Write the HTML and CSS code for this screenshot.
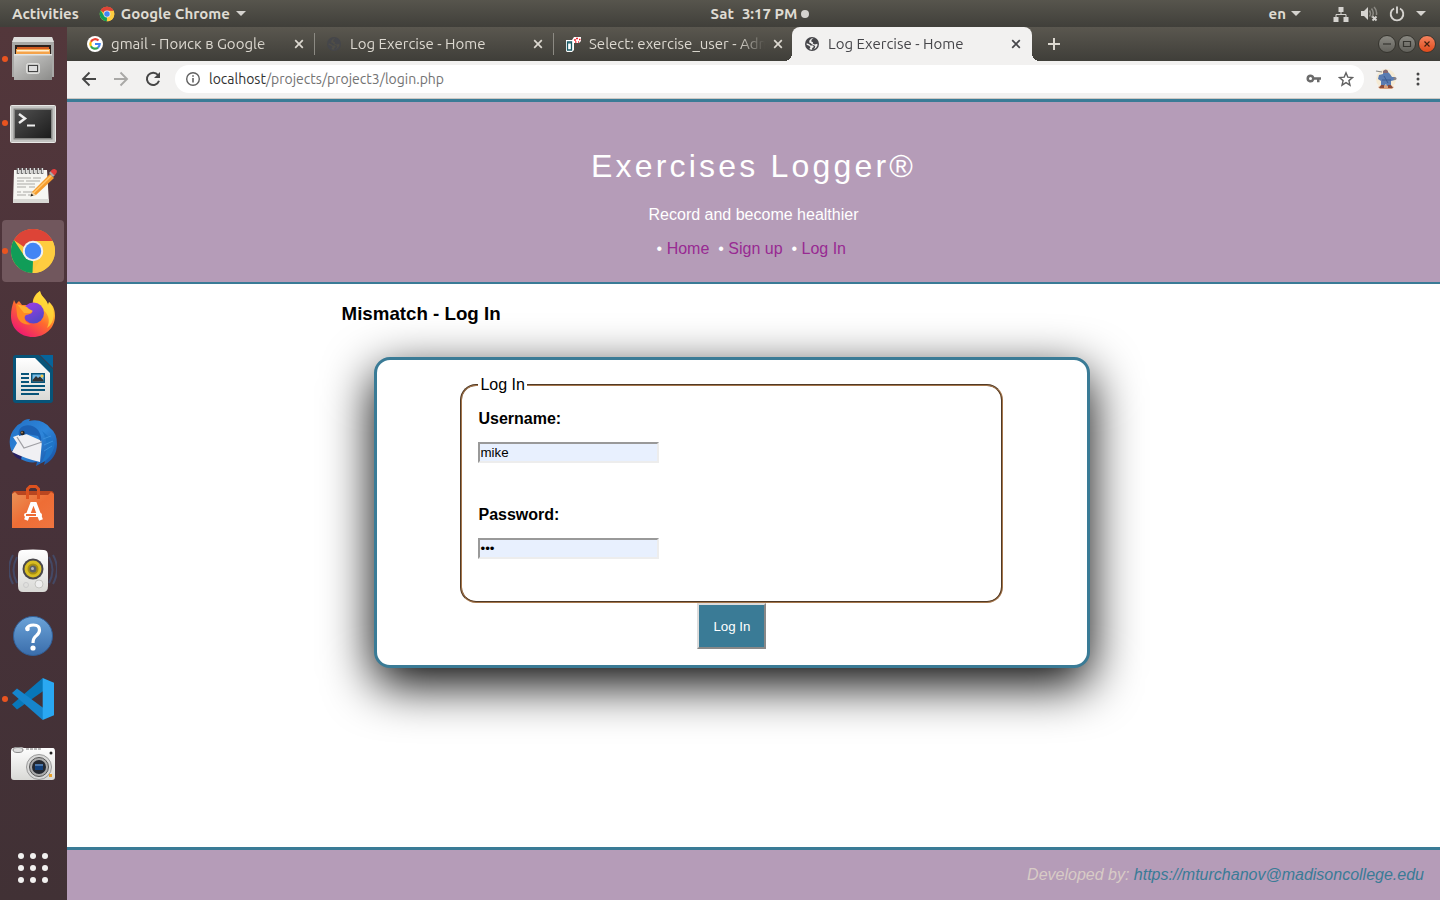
FILE: index.html
```html
<!DOCTYPE html>
<html lang="en">
<head>
<meta charset="utf-8">
<title>Log Exercise - Home</title>
<link rel="stylesheet" href="styles.css">
</head>
<body>
<svg width="0" height="0" class="defs" aria-hidden="true">
  <defs>
    <symbol id="chrome" viewBox="0 0 48 48">
      <circle cx="24" cy="24" r="22" fill="#fbc93c"/>
      <path d="M24 24 4.900 13A22 22 0 0 1 43.100 13L24 14Z" fill="#dd4437"/>
      <path d="M4.900 13 15.300 29 24 34 23.500 46A22 22 0 0 1 4.900 13Z" fill="#109d58"/>
      <path d="M24 14H43.600A22 22 0 0 1 23.500 46L33 29Z" fill="#fecd40"/>
      <path d="M4.900 13A22 22 0 0 1 43.600 14H24L15 20Z" fill="#dd4437"/>
      <circle cx="24" cy="24" r="10.200" fill="#f1f1f1"/>
      <circle cx="24" cy="24" r="8.200" fill="#4285f4"/>
    </symbol>
    <symbol id="close" viewBox="0 0 10 10"><path d="M1.200 1.200 8.800 8.800M8.800 1.200 1.200 8.800" fill="none" stroke="currentColor" stroke-width="1.700"/></symbol>
    <symbol id="globe" viewBox="0 0 16 16">
      <circle cx="8" cy="8" r="7" fill="currentColor"/>
      <path d="M9.500 2.300 7.500 3.800 7.300 5.600 9 6.200 8.800 7.400 10.500 8.600 13.400 7.800 13.500 9.200 12 12 9 13.600 8 13.600 8.200 12 9.800 10.900 9 9.600 6.500 9.400 5.300 8.200 2.700 7.200 2.600 8.800 5 9.800 6.500 11 5.400 13 7 13.700 9.500 13.500 11 11.600 11.200 10 7.800 8.300 6.800 7.300 5.200 6.600 5.400 4.400 7.300 2.500Z" fill="var(--land)"/>
    </symbol>
    <linearGradient id="metal" x1="0" y1="0" x2="1" y2="1"><stop offset="0" stop-color="#d0d0ce"/><stop offset="1" stop-color="#8c8c8a"/></linearGradient>
    <linearGradient id="paper" x1="0" y1="0" x2="0" y2="1"><stop offset="0" stop-color="#fff"/><stop offset="1" stop-color="#d9d9d6"/></linearGradient>
    <linearGradient id="fox" x1="1" y1="0" x2="0.300" y2="1"><stop offset="0" stop-color="#fff44f"/><stop offset="0.350" stop-color="#ffb72d"/><stop offset="0.600" stop-color="#ff6a2e"/><stop offset="1" stop-color="#ee1a70"/></linearGradient>
    <linearGradient id="foxcore" x1="0" y1="0" x2="0.500" y2="1"><stop offset="0" stop-color="#a33be8"/><stop offset="1" stop-color="#5448c8"/></linearGradient>
    <linearGradient id="bird" x1="0" y1="0" x2="1" y2="1"><stop offset="0" stop-color="#226fc4"/><stop offset="0.500" stop-color="#2e86da"/><stop offset="1" stop-color="#164d9e"/></linearGradient>
    <linearGradient id="help" x1="0" y1="0" x2="0" y2="1"><stop offset="0" stop-color="#6ba3d8"/><stop offset="1" stop-color="#3a6dab"/></linearGradient>
    <linearGradient id="bag" x1="0" y1="0" x2="1" y2="1"><stop offset="0" stop-color="#ea9257"/><stop offset="0.500" stop-color="#ee6d35"/><stop offset="1" stop-color="#ef7540"/></linearGradient>
    <linearGradient id="screen" x1="0" y1="0" x2="1" y2="1"><stop offset="0" stop-color="#505050"/><stop offset="1" stop-color="#1c1c1c"/></linearGradient>
  </defs>
</svg>

<header class="panel">
  <div class="panel-left">
    <button class="panel-button">Activities</button>
    <button class="panel-button app-menu"><svg class="i16"><use href="#chrome"/></svg>Google Chrome<span class="caret"></span></button>
  </div>
  <button class="panel-button clock"><span>Sat</span><span>3:17 PM</span><span class="dot"></span></button>
  <div class="panel-right">
    <button class="panel-button lang">en<span class="caret"></span></button>
    <button class="panel-button status" aria-label="System menu">
      <svg class="i16" viewBox="0 0 16 16" fill="#d5d3cf"><path d="M5.500 1h5v5h-5zM.500 11h5v5h-5zM10.500 11h5v5h-5z"/><path d="M8 6v3M3 11V8.500h10V11" fill="none" stroke="#d5d3cf"/></svg>
      <svg class="i18" viewBox="0 0 18 18"><path d="M1 6h3l4-4v13l-4-4H1Z" fill="#d5d3cf"/><path d="M9.500 5.500q2 3 0 6M11.500 3.500q3.500 4.500 0 9M14 2q3 3 2.500 8" fill="none" stroke="#8b8983" stroke-width="1.500"/><path d="m12.500 11.500 4 4m0-4-4 4" stroke="#d5d3cf" stroke-width="1.800"/></svg>
      <svg class="i16" viewBox="0 0 16 16" fill="none" stroke="#d5d3cf" stroke-width="1.900"><path d="M5 2.500a6.300 6.300 0 1 0 6 0M8 .500v7"/></svg>
      <span class="caret"></span>
    </button>
  </div>
</header>

<div class="desktop">
  <nav class="dock" aria-label="Dock">
    <button class="dock-item running" aria-label="Files">
      <svg viewBox="0 0 48 48"><path d="M5 2H43L45 8V42H3V8Z" fill="#a9a9a7"/><path d="M5 2H43L45 7H3Z" fill="#dededc"/><path d="M6 10H42V20H6Z" fill="#2c211d"/><path d="M8 12H40V20H8Z" fill="#d25a20"/><path d="M7 14H41V20H7Z" fill="#f5a34a"/><path d="M8 15H40V16.500H8Z" fill="#fff0d5"/><path d="M5 19H43V45H5Z" fill="url(#metal)"/><path d="M5 19H43V20.500H5Z" fill="#e4e4e2"/><rect x="17.500" y="28.500" width="13" height="10" rx="2" fill="#c8c8c6" stroke="#e0e0de"/><rect x="19.500" y="30.500" width="9" height="6" fill="#ddd" stroke="#444"/></svg>
    </button>
    <button class="dock-item running" aria-label="Terminal">
      <svg viewBox="0 0 48 48"><rect x="1.500" y="6.500" width="45" height="37" rx="1" fill="#c4c4c2" stroke="#e9e9e7"/><rect x="4.500" y="9.500" width="39" height="31" fill="#858583"/><rect x="6" y="11" width="36" height="28" fill="url(#screen)"/><path d="m10 15 6 4.500L10 24" fill="none" stroke="#eee" stroke-width="2.500"/><path d="M18 26.500H26" stroke="#eee" stroke-width="2"/></svg>
    </button>
    <button class="dock-item" aria-label="Text Editor">
      <svg viewBox="0 0 48 48"><path d="M5 7H38L40 40H4Z" fill="#f6f6f2"/><path d="M4 36H40V40H4Z" fill="#d9d9d5"/><path d="M9 5v6M13 5v6M17 5v6M21 5v6M25 5v6M29 5v6M33 5v6" stroke="#777" stroke-width="2.600"/><path d="M9.500 5v5M13.500 5v5M17.500 5v5M21.500 5v5M25.500 5v5M29.500 5v5M33.500 5v5" stroke="#ddd"/><path d="M8 15h14m2 0h8M8 18h7m2 0h14M8 21h18M8 24h9m3 0h6M8 29h4m2 0h10M8 32h9m2 0h5" stroke="#aaa9a5"/><path d="m23 29 18-18 4 4-18 17-5 1Z" fill="#f59c2d"/><path d="m24.500 30 18-17.500" stroke="#ffc66d" stroke-width="1.500"/><path d="m23 29 4 3-5.500 1.500Z" fill="#eed7af"/><path d="m21.500 33.500 1-3 2 2Z" fill="#222"/><path d="m40 10 4 4 2-2-4-4Z" fill="#aaa"/><path d="m41.500 8.500 4 4c3-3 3-5 1-6s-3-.500-5 2Z" fill="#e13e3e"/></svg>
    </button>
    <button class="dock-item running active" aria-label="Google Chrome"><svg><use href="#chrome"/></svg></button>
    <button class="dock-item" aria-label="Firefox">
      <svg viewBox="0 0 48 48"><path d="M24 46C11 46 2 37 2 25 2 19 3 15 5 9L7 13 10 10 13 14 24 14C23 8 26 3 31 0 32 6 38 8 39 14L40 11C45 15 46 20 46 25 46 37 36 46 24 46Z" fill="url(#fox)"/><path d="M31 0C32 6 38 8 39 14L40 11C47 19 46 32 38 37 42 29 39 22 33 18 30 15 25 14 24 13 24 7 28 3 31 0Z" fill="#ffde3b" opacity=".750"/><circle cx="24.500" cy="22" r="10.500" fill="url(#foxcore)"/><path d="M7 13 15 16 23 20C24 23 20 23 17 24 14 26 16 32 22 33 16 35 9 31 8 24Z" fill="#ff8a24"/><path d="M8 13C12 15 17 14 20 18L24 20 21 22 15 22Z" fill="#ffb030"/></svg>
    </button>
    <button class="dock-item" aria-label="LibreOffice Writer">
      <svg viewBox="0 0 48 48"><path d="M7 0H30L44 14V45Q44 48 41 48H7Q4 48 4 45V3Q4 0 7 0Z" fill="#075479"/><path d="M7 3H26L41 18V45H7Z" fill="url(#paper)"/><path d="M31 0H44V13Z" fill="#06649b"/><path d="M12 19h8M12 23h8M12 27h8M12 31h24M12 35h24M12 39h18" stroke="#075479" stroke-width="2"/><path d="M22 18H36V28H22Z" fill="#075479"/><path d="M23.500 19.500H34.500V26.500H23.500Z" fill="#77bde8"/><path d="M23.500 26.500V25L27 21 29 23 31 21.500 34.500 25V26.500Z" fill="#333"/><circle cx="33" cy="21" r="1.500" fill="#f6c945"/></svg>
    </button>
    <button class="dock-item" aria-label="Thunderbird">
      <svg viewBox="0 0 48 48"><path d="M12 4Q15 0 21 0L20 2Q33-1 41 9 48 14 48 25 48 39 35 46L36 42 27 47 28 43C18 45 7 39 2 31Q-2 18 6 9Q9 5 14 3Z" fill="url(#bird)"/><path d="M3 31Q4 38 12 41L13 36Z" fill="#282163"/><path d="M4 18 15 14 33 22 31 43Q17 40 3 33L8 24Z" fill="#f0f0f3"/><path d="m8 18 7 11 18-6" fill="none" stroke="#a0a0a5" stroke-width="1.300"/><path d="M10 17C7 5 23 3 29 11 33 17 32 21 33 25L29 17 18 15Z" fill="#1c61b4"/><path d="M33 12Q43 28 32 44L36 42Q45 35 46 23Z" fill="#1f75c8"/><path d="m34 20 8-3M35 26l9-4M35 32l8-5" stroke="#3a90dc"/><circle cx="13.500" cy="14" r="2.200" fill="#222"/><circle cx="13" cy="13.500" r="1" fill="#a47e58"/></svg>
    </button>
    <button class="dock-item" aria-label="Ubuntu Software">
      <svg viewBox="0 0 48 48"><path d="M3 12Q3 8 6 8H42Q45 8 45 12Z" fill="#b94620"/><path d="M3 11 6 9 9 12H39L42 9 45 11V45H3Z" fill="url(#bag)"/><path d="M18.500 16V6L21 3.500H27L29.500 6V16" fill="none" stroke="#dc521f" stroke-width="3"/><path d="M17 37 23 21h3l6 16" fill="none" stroke="#fff" stroke-width="4"/><rect x="15" y="30" width="18" height="4" rx="2" fill="#fff"/><path d="M17 32H27" stroke="#ee6d35" stroke-width="2"/></svg>
    </button>
    <button class="dock-item" aria-label="Rhythmbox">
      <svg viewBox="0 0 48 48"><path d="M4 8Q-4 22 4 37M8 10Q1 23 8 36M44 8Q52 22 44 37M40 10Q47 23 40 36" fill="none" stroke="#435277" stroke-width="2" opacity=".700"/><path d="M13 3Q24 2 35 3 39 3 39 9V39Q39 45 34 45H14Q9 45 9 39V9Q9 3 13 3Z" fill="url(#paper)"/><circle cx="24" cy="22" r="10.500" fill="#49474b"/><circle cx="24" cy="22" r="8.500" fill="#d8bd22"/><circle cx="24" cy="22" r="5.500" fill="#a88e12"/><circle cx="24" cy="22" r="3.500" fill="#5d6064"/><circle cx="23.500" cy="21.500" r="1.500" fill="#bbb"/><circle cx="30" cy="37" r="4" fill="#eee" stroke="#c5c5c2"/><circle cx="17" cy="38" r="2.500" fill="none" stroke="#ccc"/></svg>
    </button>
    <button class="dock-item" aria-label="Help">
      <svg viewBox="0 0 48 48"><circle cx="24" cy="25" r="19.500" fill="url(#help)" stroke="#315f98"/><path d="M17.500 18Q19 14 24.500 14 30.500 14 30.500 19 30.500 22 27.500 24.500 24 27 24 32" fill="none" stroke="#fff" stroke-width="3.200"/><circle cx="18.500" cy="18" r="2.300" fill="#fff"/><circle cx="24" cy="37" r="2.600" fill="#fff"/></svg>
    </button>
    <button class="dock-item running" aria-label="Visual Studio Code">
      <svg viewBox="0 0 48 48"><path d="M33.700 3 3 29.500 8 34.500 35 15.500Z" fill="#0877b9"/><path d="M3 18 8 13.500 35 33.500 33.700 45Z" fill="#1685cc"/><path d="M33.700 3 45 7.700V40.300L33.700 45Z" fill="#2aa8f2"/></svg>
    </button>
    <button class="dock-item" aria-label="Shotwell">
      <svg viewBox="0 0 48 48"><path d="M4 9Q10 7 15 9H44Q46 9 46 13V38Q46 41 43 41H5Q2 41 2 38V13Q2 9 4 9Z" fill="url(#paper)"/><ellipse cx="9" cy="11" rx="5" ry="2.500" fill="#ddd" stroke="#888"/><path d="M17 10H32" stroke="#777" stroke-dasharray="3 1"/><circle cx="30" cy="28" r="12.500" fill="#d8d8d7" stroke="#999"/><circle cx="30" cy="28" r="9.500" fill="#aaa" stroke="#555"/><circle cx="30" cy="28" r="7" fill="#242830"/><path d="M26 25H34V31H26Z" fill="#123f79"/><path d="M26 25H34V27H26Z" fill="#4b75a7"/><circle cx="42" cy="14" r="1.500" fill="#222"/><path d="M40 35H43V38H40Z" fill="#eba129"/></svg>
    </button>
    <button class="dock-item apps" aria-label="Show Applications">
      <svg viewBox="0 0 48 48" fill="#f2f1f0"><circle cx="12" cy="12" r="3"/><circle cx="24" cy="12" r="3"/><circle cx="36" cy="12" r="3"/><circle cx="12" cy="24" r="3"/><circle cx="24" cy="24" r="3"/><circle cx="36" cy="24" r="3"/><circle cx="12" cy="36" r="3"/><circle cx="24" cy="36" r="3"/><circle cx="36" cy="36" r="3"/></svg>
    </button>
  </nav>

  <div class="browser">
    <div class="tabstrip">
      <div class="tab">
        <svg class="i16" viewBox="0 0 16 16"><circle cx="8" cy="8" r="8" fill="#fff"/><g fill="none" stroke-width="2.200"><path d="M11.500 4.600A4.700 4.700 0 0 0 3.900 5.800" stroke="#ea4335"/><path d="M3.900 5.800A4.700 4.700 0 0 0 3.900 10.300" stroke="#fbbc05"/><path d="M3.900 10.300A4.700 4.700 0 0 0 11 11.600" stroke="#34a853"/><path d="M11 11.600Q12.700 10.200 12.700 8H8" stroke="#4285f4"/></g></svg>
        <span class="tab-title">gmail - Поиск в Google</span>
        <button class="tab-close" aria-label="Close tab"><svg><use href="#close"/></svg></button>
      </div>
      <div class="tab">
        <svg class="i16 dim"><use href="#globe"/></svg>
        <span class="tab-title">Log Exercise - Home</span>
        <button class="tab-close" aria-label="Close tab"><svg><use href="#close"/></svg></button>
      </div>
      <div class="tab no-rule">
        <svg class="i16" viewBox="0 0 16 16"><path d="M1 4H7L9 1H16V5L14 7H9V14L7 16H2L1 15Z" fill="#fff"/><path d="M2.500 6H6.500V14H2.500Z" fill="#fff" stroke="#185a66" stroke-width="1.300"/><path d="M2 7H7" stroke="#185a66"/><path d="M9 4h2M11 2.500h2M14 3.500h1.500M10 6h1.500M13 6h1" stroke="#ee2630" stroke-width="1.300"/></svg>
        <span class="tab-title">Select: exercise_user - Adminer</span>
        <button class="tab-close" aria-label="Close tab"><svg><use href="#close"/></svg></button>
      </div>
      <div class="tab current">
        <svg class="i16"><use href="#globe"/></svg>
        <span class="tab-title">Log Exercise - Home</span>
        <button class="tab-close" aria-label="Close tab"><svg><use href="#close"/></svg></button>
      </div>
      <button class="new-tab" aria-label="New tab"><svg viewBox="0 0 12 12"><path d="M6 0V12M0 6H12" stroke="currentColor" stroke-width="2"/></svg></button>
      <div class="window-controls">
        <button aria-label="Minimize"><svg viewBox="0 0 16 16"><path d="M4 8H12" stroke="#35342f" stroke-width="1.200"/></svg></button>
        <button aria-label="Maximize"><svg viewBox="0 0 16 16"><path d="M4.500 5.500H11.500V10.500H4.500Z" fill="none" stroke="#35342f" stroke-width="1.200"/></svg></button>
        <button class="window-close" aria-label="Close"><svg viewBox="0 0 16 16"><path d="m5.500 5.500 5 5m0-5-5 5" stroke="#41200f" stroke-width="1.200"/></svg></button>
      </div>
    </div>

    <div class="toolbar">
      <button class="tool" aria-label="Back"><svg class="i16" viewBox="0 0 16 16" fill="none" stroke="#464646" stroke-width="1.900"><path d="M15 8H2M8.500 1.500 2 8l6.500 6.500"/></svg></button>
      <button class="tool" aria-label="Forward"><svg class="i16" viewBox="0 0 16 16" fill="none" stroke="#a9a8a6" stroke-width="1.900"><path d="M1 8H14M7.500 1.500 14 8l-6.500 6.500"/></svg></button>
      <button class="tool" aria-label="Reload"><svg class="i16" viewBox="0 0 16 16"><path d="M13 4A6.200 6.200 0 1 0 14 9.800" fill="none" stroke="#464646" stroke-width="2"/><path d="M15 1V7H9Z" fill="#464646"/></svg></button>
      <div class="omnibox">
        <svg class="i16" viewBox="0 0 16 16"><circle cx="8" cy="8" r="6.300" fill="none" stroke="#616161" stroke-width="1.400"/><path d="M8 7v4.500M8 4.200v1.600" stroke="#616161" stroke-width="1.600"/></svg>
        <div class="url"><span class="host">localhost</span>/projects/project3/login.php</div>
        <button class="tool" aria-label="Saved password"><svg class="i16" viewBox="0 0 16 16"><path d="M4.500 3.500a4 4 0 1 0 3.800 5.200H11v2.500h2.500V8.700H15V6.300H8.300A4 4 0 0 0 4.500 3.500Zm0 2.500a1.500 1.500 0 1 1 0 3 1.500 1.500 0 0 1 0-3Z" fill="#6b6b6b" fill-rule="evenodd"/></svg></button>
        <button class="tool" aria-label="Bookmark"><svg class="i16" viewBox="0 0 16 16"><path d="m8 1.800 1.800 4.300 4.700.400-3.600 3.100 1.100 4.600L8 11.700l-4 2.500 1.100-4.600L1.500 6.500l4.700-.400Z" fill="none" stroke="#616161" stroke-width="1.400"/></svg></button>
      </div>
      <button class="tool avatar" aria-label="Profile"><svg viewBox="0 0 22 22"><circle cx="11" cy="11" r="10" fill="#f5ead4"/><path d="M3 19Q10 15 19 19L17 21H5Z" fill="#d99f79"/><path d="M8 5Q11 2 13 4L15 6 17 9 20 9V12L16 13 16 18H12L11 16 9 18H6L6 13 3 11 4 7 8 6Z" fill="#5a7cb2"/><path d="M8 3Q11 0 13 3V5H8Z" fill="#876a72"/><path d="M1 3 7 4" stroke="#8b8a88" stroke-width="1.200"/><path d="M7 12H16M9 8 13 15" stroke="#3b5a91"/><path d="M6 17H9V20H4ZM13 17H16L18 20H13Z" fill="#8b4b3b"/><circle cx="20" cy="10.500" r="1.500" fill="#8a8388"/></svg></button>
      <button class="tool" aria-label="Menu"><svg class="i16" viewBox="0 0 16 16" fill="#464646"><circle cx="8" cy="3" r="1.500"/><circle cx="8" cy="8" r="1.500"/><circle cx="8" cy="13" r="1.500"/></svg></button>
    </div>

    <div class="page">
      <header class="site-header">
        <h1>Exercises Logger®</h1>
        <p>Record and become healthier</p>
        <ul class="site-nav">
          <li>&bull; <a href="#home">Home</a>&nbsp;</li>
          <li>&bull; <a href="#signup">Sign up</a>&nbsp;</li>
          <li>&bull; <a href="#login">Log In</a>&nbsp;</li>
        </ul>
      </header>
      <main class="content">
        <h3>Mismatch - Log In</h3>
        <form class="login">
          <fieldset>
            <legend>Log In</legend>
            <div class="field"><label for="username">Username:</label><input id="username" type="text" value="mike"></div>
            <div class="field"><label for="password">Password:</label><input id="password" type="password" value="abc"></div>
          </fieldset>
          <button class="submit" type="button">Log In</button>
        </form>
      </main>
      <footer class="site-footer">Developed by: <a href="#author">https://mturchanov@madisoncollege.edu</a></footer>
    </div>
  </div>
</div>
</body>
</html>
```

FILE: styles.css
```css
* { box-sizing: border-box; }

body {
  margin: 0;
  min-height: 100vh;
  display: flex;
  flex-direction: column;
  font-family: "Liberation Sans", Arial, sans-serif;
  font-size: 16px;
  background: #fff;
}

svg { display: block; flex: none; }
.defs { position: absolute; }
.i16 { width: 16px; height: 16px; }
.i18 { width: 18px; height: 18px; }

.panel button, .dock button, .tabstrip button, .toolbar button {
  border: 0;
  padding: 0;
  background: none;
  color: inherit;
}

/* Desktop top panel */
.panel {
  height: 27px;
  padding: 0 14px 0 12px;
  display: grid;
  grid-template-columns: 1fr auto 1fr;
  align-items: center;
  color: #dfdbd2;
  background: linear-gradient(#57554d, #403f3a);
}
.panel .panel-button {
  display: flex;
  align-items: center;
  font: 600 15px/20px "Ubuntu", "Open Sans", "Noto Sans", sans-serif;
  white-space: nowrap;
}
.panel-left { display: flex; gap: 20px; }
.panel .app-menu { gap: 6px; }
.panel .clock { gap: 8px; margin-left: 82px; }
.clock .dot {
  width: 8px;
  height: 8px;
  margin-left: -4px;
  border-radius: 50%;
  background: #d5d3cf;
}
.panel-right { display: flex; justify-content: flex-end; gap: 32px; }
.panel .lang { gap: 5px; }
.panel .status { gap: 11px; }
.caret {
  border: 5px solid transparent;
  border-top-color: #d5d3cf;
  border-bottom: 0;
}

/* Dock */
.desktop { flex: 1; display: flex; }
.dock {
  width: 67px;
  flex: none;
  display: flex;
  flex-direction: column;
  background: linear-gradient(#53373b, #48323a 50%, #413135);
}
.dock .dock-item {
  position: relative;
  width: 62px;
  height: 62px;
  margin: 1px 2px;
  display: flex;
  align-items: center;
  justify-content: center;
  border-radius: 4px;
}
.dock-item svg { width: 48px; height: 48px; }
.dock .active { background: #71575d; }
.running::before {
  content: "";
  position: absolute;
  left: 0;
  width: 6px;
  height: 6px;
  border-radius: 50%;
  background: #e95420;
}
.dock .apps { margin-top: auto; }

/* Browser chrome */
.browser {
  flex: 1;
  min-width: 0;
  display: flex;
  flex-direction: column;
}
.tabstrip {
  height: 34px;
  padding: 0 4px 0 8px;
  display: flex;
  align-items: center;
  color: #dcd8d0;
  background: linear-gradient(#5a574f, #3f3e39);
}
.tab {
  position: relative;
  width: 240px;
  height: 34px;
  padding: 0 10px 0 12px;
  display: flex;
  align-items: center;
  gap: 8px;
  font: 15px/20px "Ubuntu", "Noto Sans", sans-serif;
  --land: #504e47;
}
.tab:not(.current) { margin-right: -1px; }
.tab:not(.current):not(.no-rule) { border-right: 1px solid; border-image: linear-gradient(transparent 20%, #8c8a83 20% 80%, transparent 80%) 1; }
.dim { color: #45464a; }
.tab-title {
  flex: 1;
  min-width: 0;
  overflow: hidden;
  white-space: nowrap;
  mask-image: linear-gradient(90deg, #000 85%, transparent);
}
.tab-close svg { width: 10px; height: 10px; }
.tab.current {
  padding-right: 11px;
  border-radius: 8px 8px 0 0;
  color: #46464a;
  background: #f2f1f0;
  --land: #f2f1f0;
}
.current::before, .current::after {
  content: "";
  position: absolute;
  bottom: 0;
  width: 8px;
  height: 8px;
}
.current::before { right: 100%; background: radial-gradient(circle at 0 0, transparent 8px, #f2f1f0 8px); }
.current::after { left: 100%; background: radial-gradient(circle at 100% 0, transparent 8px, #f2f1f0 8px); }
.tabstrip .new-tab { margin-left: 16px; }
.new-tab svg { width: 12px; height: 12px; }
.window-controls { margin-left: auto; display: flex; gap: 2px; }
.window-controls button {
  width: 18px;
  height: 18px;
  border-radius: 50%;
  border: 1px solid #36352f;
  background: linear-gradient(#8a8982, #62615b);
}
.window-controls .window-close { background: linear-gradient(#f5845f, #df4a1b); }

.toolbar {
  height: 38px;
  padding: 4px 14px 5px;
  display: flex;
  align-items: center;
  gap: 16px;
  background: #f2f1f0;
  border-bottom: 1px solid #ccc8c4;
}
.omnibox {
  flex: 1;
  height: 28px;
  margin: 0 -2px;
  padding: 0 10px;
  display: flex;
  align-items: center;
  gap: 8px;
  border-radius: 14px;
  background: #fff;
}
.omnibox .tool + .tool { margin-left: 8px; }
.url {
  flex: 1;
  font: 14px/20px "Ubuntu", "Noto Sans", sans-serif;
  color: #737373;
}
.host { color: #303030; }
.toolbar .avatar { margin: 0 -3px; }
.avatar svg { width: 22px; height: 22px; }

/* Web page */
.page {
  flex: 1;
  display: flex;
  flex-direction: column;
}
.site-header {
  padding: 46px 0 24px;
  text-align: center;
  line-height: 18px;
  color: #fff;
  background: #b59cb8;
  border-top: 3px solid #3a7b96;
  border-bottom: 2px solid #3a7b96;
}
.site-header h1 {
  margin: 0 0 21px;
  font-size: 32px;
  font-weight: 400;
  line-height: 37px;
  letter-spacing: 0.1em;
}
.site-header p { margin: 0 0 16px; }
.site-nav { margin: 0; padding: 0; list-style: none; }
.site-nav li { display: inline; }
.site-nav a { color: #982a92; text-decoration: none; }

.content { flex: 1; width: 60%; margin: 0 auto; }
.content h3 {
  margin: 19px 0 32px;
  line-height: 22px;
}
.login {
  width: 87%;
  margin-left: 32px;
  padding: 16px;
  display: flex;
  flex-direction: column;
  align-items: center;
  border: 3px solid #3a7b96;
  border-radius: 16px;
  background: #fff;
  box-shadow: 0 16px 50px #000;
}
.login fieldset {
  width: 80%;
  margin: 0;
  padding: 16px 16px 42px;
  border: 2px groove #a5774d;
  border-radius: 16px;
}
.login legend { padding: 0 2px; line-height: 18px; }
.field { display: flex; flex-direction: column; align-items: flex-start; gap: 14px; }
.field + .field { margin-top: 43px; }
.field label { font-weight: 700; line-height: 18px; }
.field input {
  width: 181px;
  height: 21px;
  padding: 1px 0;
  font-family: inherit;
  color: #000;
  background: #e8f0fe;
  border: 2px solid;
  border-color: #999 #ededed #ededed #999;
}
.submit {
  min-height: 46px;
  padding: 0 14px;
  font-family: inherit;
  color: #fff;
  background: #3a7b96;
  border: 2px solid;
  border-color: #dcdcdc #888 #888 #dcdcdc;
}

.site-footer {
  padding: 16px;
  text-align: right;
  font-style: italic;
  line-height: 18px;
  color: #d8cbc6;
  background: #b59cb8;
  border-top: 3px solid #3a7b96;
}
.site-footer a { color: #3a7b96; text-decoration: none; }
```
